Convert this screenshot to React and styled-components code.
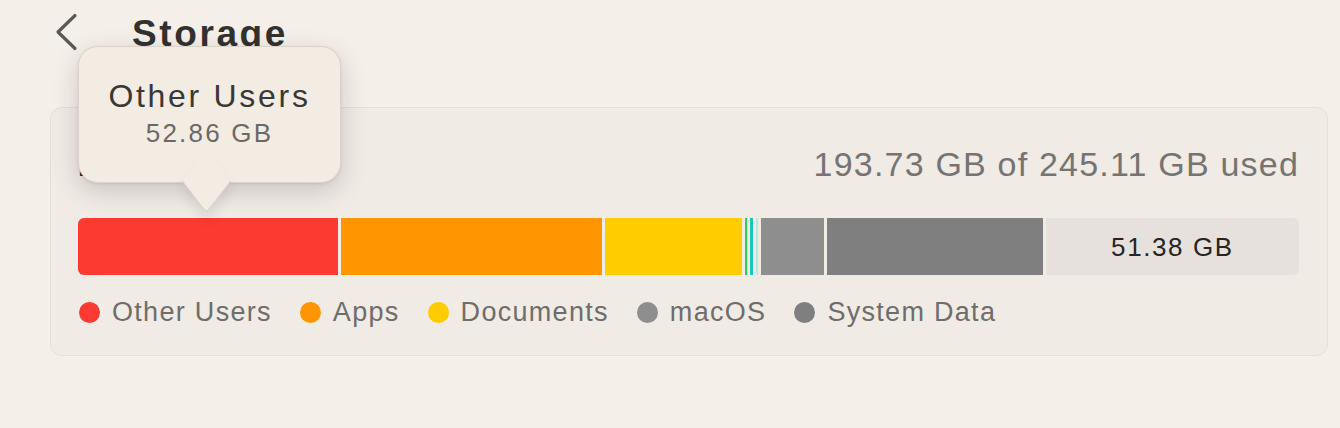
import React from 'react'
import styled, { createGlobalStyle } from 'styled-components'

const GlobalStyle = createGlobalStyle`
    html, body {margin: 0; padding: 0; background: #f4efe9;}
    body {font-family: "Liberation Sans", Arial, sans-serif; -webkit-font-smoothing: antialiased;}
`

const segments = [
    { name: 'Other Users', size: 52.86, color: '#fd3a32' },
    { name: 'Apps', size: 52.9, color: '#ff9500' },
    { name: 'Documents', size: 27.8, color: '#ffcc00' },
    { name: 'green', size: 0.4, color: '#2ed158' },
    { name: 'teal', size: 0.65, color: '#19c8b8' },
    { name: 'light', size: 0.3, color: '#bfe3dd' },
    { name: 'macOS', size: 12.8, color: '#8e8e8e' },
    { name: 'System Data', size: 43.9, color: '#7f7f7f' },
]

const legend = [
    { name: 'Other Users', color: '#fd3a32' },
    { name: 'Apps', color: '#ff9500' },
    { name: 'Documents', color: '#ffcc00' },
    { name: 'macOS', color: '#8e8e8e' },
    { name: 'System Data', color: '#7f7f7f' },
]

const App = () => {
    return (
        <>
            <GlobalStyle />
            <Page>
                <Header>
                    <BackBtn>
                        <svg width="24" height="38" viewBox="0 0 24 38" fill="none">
                            <path d="M21 2.5L4 19L21 35.5" stroke="#5a5858" strokeWidth="3.2" strokeLinecap="round" strokeLinejoin="round" />
                        </svg>
                    </BackBtn>
                    <Title>Storage</Title>
                </Header>
                <Card>
                    <Tooltip>
                        <h4>Other Users</h4>
                        <p>52.86 GB</p>
                    </Tooltip>
                    <TopRow>
                        <DiskName>Macintosh HD</DiskName>
                        <Used>193.73 GB of 245.11 GB used</Used>
                    </TopRow>
                    <Bar>
                        {segments.map((s) => (
                            <Segment key={s.name} $color={s.color} style={{ flexGrow: s.size }} />
                        ))}
                        <Free style={{ flexGrow: 51.38 }}>51.38 GB</Free>
                    </Bar>
                    <Legend>
                        {legend.map((l) => (
                            <LegendItem key={l.name} $color={l.color}>{l.name}</LegendItem>
                        ))}
                    </Legend>
                </Card>
            </Page>
        </>
    )
}

const Page = styled.div`
    width: 1340px; height: 428px; overflow: hidden; box-sizing: border-box; padding: 0 12px 0 50px;
`
const Header = styled.div`
    display: flex; align-items: center; height: 66px; padding-left: 4px;
`
const BackBtn = styled.a`
    display: flex; width: 24px; height: 38px; margin-top: -2px; cursor: pointer;
`
const Title = styled.h1`
    margin: 0 0 0 54px; font-size: 37px; font-weight: 700; color: #333130; letter-spacing: 2.6px; line-height: 1;
`
const Card = styled.div`
    position: relative; margin-top: 41px; height: 249px; box-sizing: border-box;
    background: #f0ebe5; border: 1px solid #e4dfd9; border-radius: 12px; padding: 0 28px 0 27px;
`
const Tooltip = styled.div`
    position: absolute; left: 27px; top: -62px; width: 263px; height: 137px; box-sizing: border-box; z-index: 2;
    background: #f3ece3; border: 1px solid #d9d3cc; border-radius: 20px; text-align: center; padding-top: 33px;
    box-shadow: 0 8px 26px rgba(0,0,0,0.17), 0 1px 3px rgba(0,0,0,0.08);
    &:after {content: ""; position: absolute; left: 110px; bottom: -17px; width: 34px; height: 34px;
        background: #f3ece3; transform: scaleY(1.3) rotate(45deg); border-radius: 0 0 4px 0;
        border-right: 1px solid #d9d3cc; border-bottom: 1px solid #d9d3cc; box-shadow: 5px 5px 10px rgba(0,0,0,0.08);}
    h4 {margin: 0; font-size: 32px; font-weight: 400; color: #3a3837; line-height: 1; letter-spacing: 2.7px;}
    p {margin: 8px 0 0; font-size: 26px; color: #6b6967; line-height: 1; letter-spacing: 2.2px;}
`
const TopRow = styled.div`
    display: flex; justify-content: space-between; align-items: baseline; height: 86px; padding-top: 37px; box-sizing: border-box;
`
const DiskName = styled.div`
    font-size: 30px; font-weight: 700; color: #2e2c2b;
`
const Used = styled.div`
    font-size: 34px; color: #767472; letter-spacing: 1.2px;
`
const Bar = styled.div`
    display: flex; gap: 3px; height: 57px; margin-top: 24px; border-radius: 6px; overflow: hidden;
`
const Segment = styled.div`
    flex-basis: 0; background: ${(p) => p.$color};
`
const Free = styled.div`
    flex-basis: 0; background: #e6e1dc; display: flex; align-items: center; justify-content: center;
    font-size: 26px; color: #262524; letter-spacing: 1.6px; padding-top: 1px;
`
const Legend = styled.div`
    display: flex; gap: 28px; margin-top: 21px; padding-left: 1px;
`
const LegendItem = styled.div`
    display: flex; align-items: center; gap: 12px; font-size: 27px; color: #6f6d6b; letter-spacing: 1.3px; line-height: 32px;
    &:before {content: ""; width: 21px; height: 21px; border-radius: 50%; background: ${(p) => p.$color};}
`

export default App
